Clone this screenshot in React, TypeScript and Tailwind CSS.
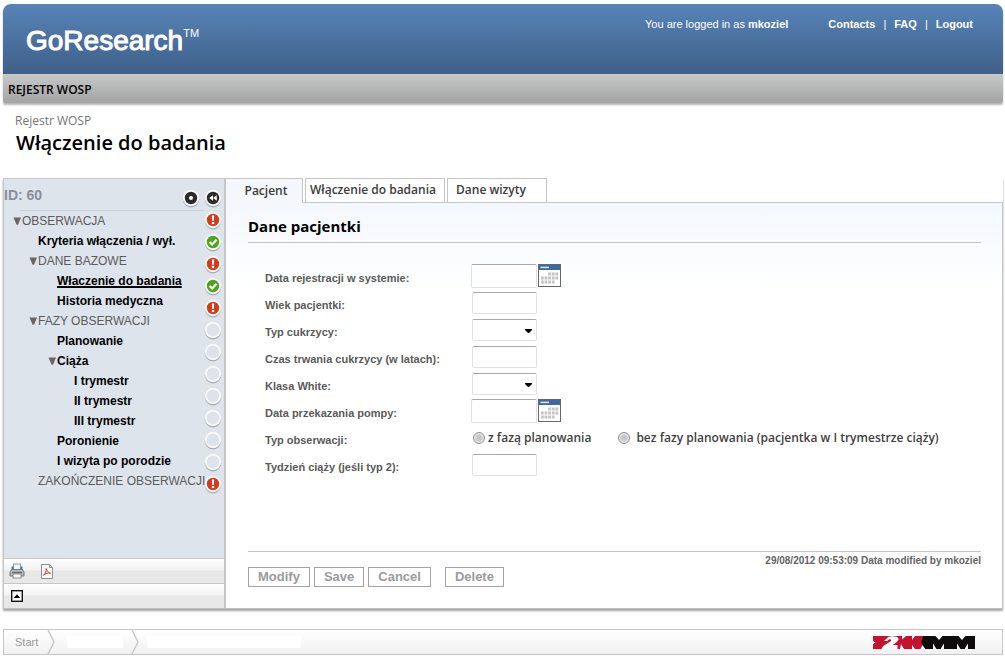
import React, { useId, useState } from "react";

type Status = "alert" | "ok" | "empty";

interface TreeItem {
  label: string;
  indent: string;
  kind: "group" | "leaf";
  arrow?: boolean;
  current?: boolean;
}

const TREE: TreeItem[] = [
  { label: "OBSERWACJA", indent: "pl-2", kind: "group", arrow: true },
  { label: "Kryteria włączenia / wył.", indent: "pl-[34px]", kind: "leaf" },
  { label: "DANE BAZOWE", indent: "pl-6", kind: "group", arrow: true },
  { label: "Właczenie do badania", indent: "pl-[53px]", kind: "leaf", current: true },
  { label: "Historia medyczna", indent: "pl-[53px]", kind: "leaf" },
  { label: "FAZY OBSERWACJI", indent: "pl-6", kind: "group", arrow: true },
  { label: "Planowanie", indent: "pl-[53px]", kind: "leaf" },
  { label: "Ciąża", indent: "pl-[43px]", kind: "leaf", arrow: true },
  { label: "I trymestr", indent: "pl-[70px]", kind: "leaf" },
  { label: "II trymestr", indent: "pl-[70px]", kind: "leaf" },
  { label: "III trymestr", indent: "pl-[70px]", kind: "leaf" },
  { label: "Poronienie", indent: "pl-[53px]", kind: "leaf" },
  { label: "I wizyta po porodzie", indent: "pl-[53px]", kind: "leaf" },
  { label: "ZAKOŃCZENIE OBSERWACJI", indent: "pl-[34px]", kind: "group" },
];

const STATUSES: Status[] = [
  "alert", "ok", "alert", "ok", "alert",
  "empty", "empty", "empty", "empty", "empty", "empty", "empty",
  "alert",
];

function Disc({ fill, children }: { fill: string; children?: React.ReactNode }) {
  return (
    <svg width="18" height="20" viewBox="0 0 18 20" className="block shrink-0" aria-hidden="true">
      <circle cx="9" cy="11.3" r="8.2" fill="#7d838a" opacity="0.6" />
      <circle cx="9" cy="10" r="8.2" fill="#f8f8f8" />
      <circle cx="9" cy="10" r="6.2" fill={fill} />
      {children}
    </svg>
  );
}

function StatusIcon({ status }: { status: Status }) {
  if (status === "alert") {
    return (
      <Disc fill="#d23c1d">
        <path d="M7.8 5.4h2.4l-.4 5.400H8.2z" fill="#fff" />
        <circle cx="9" cy="13" r="1.3" fill="#fff" />
      </Disc>
    );
  }
  if (status === "ok") {
    return (
      <Disc fill="#4ea51c">
        <path d="M5.6 10l2.500 2.500 4.500-4.700" fill="none" stroke="#fff" strokeWidth="2.2" />
      </Disc>
    );
  }
  return <Disc fill="#dde3ea" />;
}

function Triangle() {
  return (
    <svg width="10" height="10" viewBox="0 0 10 10" className="block shrink-0" aria-hidden="true">
      <path d="M1.500 1.500h7.500L6 8.700H4.600z" fill="#666" />
    </svg>
  );
}

function CalendarIcon() {
  const dots: React.ReactNode[] = [];
  for (let r = 0; r < 3; r++) {
    for (let c = 0; c < 5; c++) {
      if ((r === 0 && c < 2) || (r === 2 && c > 3)) continue;
      dots.push(<rect key={`${r}-${c}`} x={3 + c * 3.6} y={8.500 + r * 4} width="2.8" height="3" fill="#c4c4c4" />);
    }
  }
  return (
    <svg width="23" height="23" viewBox="0 0 23 23" className="block" aria-hidden="true">
      <rect x="0.5" y="0.5" width="22" height="22" fill="#fff" stroke="#666" />
      <rect x="1" y="1" width="21" height="5" fill="#3a6ba5" />
      <path d="M2.500 3.400h8.500" stroke="#dfe9f4" strokeWidth="1.5" />
      {dots}
    </svg>
  );
}

function PrinterIcon() {
  return (
    <svg width="16" height="16" viewBox="0 0 16 16" aria-hidden="true">
      <rect x="4.500" y="1" width="7" height="6" fill="#f4f4f4" stroke="#9b9b9b" />
      <rect x="2.500" y="3.500" width="2" height="3.500" fill="#3c78ad" />
      <rect x="11.500" y="3.500" width="2" height="3.500" fill="#3c78ad" />
      <path d="M2.500 6.500h11l1.500 2.500v4H1V9z" fill="#bdbdbd" stroke="#777" />
      <path d="M3 9.500h10" stroke="#6a6a6a" strokeWidth="1.500" />
      <rect x="4" y="11" width="8" height="4" fill="#fff" stroke="#8b8b8b" />
    </svg>
  );
}

function PdfIcon() {
  return (
    <svg width="12" height="15" viewBox="0 0 12 15" aria-hidden="true">
      <path d="M.5.5H8.500l3 3v11H.5z" fill="#fafafa" stroke="#8d8d8d" />
      <path d="M8.500.5v3h3" fill="none" stroke="#8d8d8d" />
      <path d="M5.200 4.500c.6 2 1.500 3.800 4.300 4.800C6.800 8.700 5 9.300 2.500 11.300 4.200 9.500 5.400 7 5.200 4.500z" fill="#fbdada" stroke="#e8383b" strokeLinejoin="round" />
    </svg>
  );
}

function CompanyLogo() {
  return (
    <svg width="102" height="13" viewBox="0 0 102 13" role="img" aria-label="2KMM">
      <path d="M0 0h51v13H0z" fill="#c4122f" />
      <path d="M0 5l2.500 1.500L0 8z" fill="#fff" />
      <path d="M11 5l4-3.700C18-.4 25 0 25.500 2.700c.3 2.200-3.500 4.600-6 6.300h5V13H8.500c1-2.800 3.500-4.200 6-5.700 2-1.200 4-2.500 3.500-3.500-.6-1-2.500-.3-3.700 1.200z" fill="#fff" />
      <path d="M29 0h4l-4 3.500zM28 8l3 5h-4z" fill="#fff" />
      <path d="M39 0h3l-3 4zM39 13h3l-3-4z" fill="#fff" />
      <path d="M50 0h12.500l3.500 4 3.500-4h6.500v13H71V7.500L67.500 13h-4L60 7.500V13H52l-4-6.500z" fill="#0d0b0c" />
      <path d="M76 0h9.500l3.500 4 3.500-4H102v13h-7V7.500L91.500 13h-4L84 7.500V13h-8z" fill="#0d0b0c" />
      <path d="M47.500 13l2-4 2.500 4z" fill="#fff" />
    </svg>
  );
}

const fieldBorder = "border border-[#dfe0ea] border-t-[#a7a8b0] rounded-xs bg-white";

function Row({ label, children }: { label: string; children: (id: string) => React.ReactNode }) {
  const id = useId();
  return (
    <div className="flex h-[27px] items-center">
      <label htmlFor={id} className="w-[207px] shrink-0 pt-[5px] text-[11px] font-bold text-[#5a5a5a]">
        {label}
      </label>
      {children(id)}
    </div>
  );
}

function DateField({ id }: { id: string }) {
  return (
    <div className="-ml-px flex items-center gap-px">
      <input id={id} type="text" className={`${fieldBorder} h-6 w-[66px] px-1 text-[11px]`} />
      <button type="button" aria-label="Kalendarz">
        <CalendarIcon />
      </button>
    </div>
  );
}

function TextField({ id }: { id: string }) {
  return <input id={id} type="text" className={`${fieldBorder} h-[22px] w-[65px] px-1 text-[11px]`} />;
}

function SelectField({ id }: { id: string }) {
  return (
    <div className="relative flex">
      <select id={id} className={`${fieldBorder} h-[22px] w-[65px] appearance-none px-1 text-[11px]`}>
        <option value=""></option>
      </select>
      <svg width="7" height="4" viewBox="0 0 7 4" className="pointer-events-none absolute top-[10px] right-[5px]" aria-hidden="true">
        <path d="M0 0h7v1L4 4H3L0 1z" fill="#000" />
      </svg>
    </div>
  );
}

function Radio({ label, gap, value, onChange, checked }: { label: string; gap: string; value: string; checked: boolean; onChange: (v: string) => void }) {
  return (
    <label className={`flex items-center ${gap} font-["Open_Sans","Noto_Sans",sans-serif] text-[12px] font-semibold whitespace-nowrap text-[#3f3f3f]`}>
      <input
        type="radio"
        name="typ-obserwacji"
        value={value}
        checked={checked}
        onChange={() => onChange(value)}
        className="size-3 appearance-none rounded-full border border-[#8e8f8f] bg-[radial-gradient(circle,#c3c6ca_30%,#eeeeee_75%)] checked:bg-[#3a6ba5]"
      />
      {label}
    </label>
  );
}

function ActionButton({ children }: { children: string }) {
  return (
    <button type="button" className="h-5 border border-[#a3a3a3] bg-white px-[9px] text-[13px] leading-[18px] font-bold text-[#9b9b9b]">
      {children}
    </button>
  );
}

function Sidebar() {
  return (
    <aside className="flex w-[223px] shrink-0 flex-col border-t border-r-2 border-l border-[#c6c6c6] bg-[#dde4ec]">
      <div className="flex flex-1">
        <nav className="min-w-0 flex-1" aria-label="Formularze">
          <div className="flex h-8 items-center justify-between text-[14px] font-bold text-[#8b8d9c]">
            <span>ID: 60</span>
            <button type="button" aria-label="Stop" className="mt-[6px] mr-1">
              <Disc fill="#2b2b2b">
                <circle cx="9" cy="10" r="2" fill="#fff" />
              </Disc>
            </button>
          </div>
          <ul className="-mt-px ml-4 border-t border-[#c9d2dc]" />
          <ul className="text-[12px]">
            {TREE.map((item) => (
              <li key={item.label} className={`flex h-5 items-center ${item.indent}`}>
                {item.arrow && <Triangle />}
                <a
                  href="#"
                  aria-current={item.current ? "page" : undefined}
                  className={`whitespace-nowrap ${item.kind === "group" ? "text-[#5b5b5b]" : "font-bold text-black"} ${item.current ? "underline decoration-2 underline-offset-1" : ""}`}
                >
                  {item.label}
                </a>
              </li>
            ))}
          </ul>
        </nav>
        <div className="mt-2 flex w-[20px] shrink-0 flex-col">
          <button type="button" aria-label="Zwiń" className="flex h-[22px] items-center">
            <Disc fill="#2b2b2b">
              <path d="M9 7.200v5.600L5.200 10zM12.800 7.200v5.600L9 10z" fill="#fff" />
            </Disc>
          </button>
          {STATUSES.map((s, i) => (
            <span key={i} className="flex h-[22px] items-center">
              <StatusIcon status={s} />
            </span>
          ))}
        </div>
      </div>
      <div className="flex h-[25px] items-center gap-4 border-t border-[#c6c6c6] bg-linear-to-b from-white via-[#f3f3f3] via-45% to-[#e8e8e8] to-50% px-[5px]">
        <button type="button" aria-label="Drukuj"><PrinterIcon /></button>
        <button type="button" aria-label="PDF"><PdfIcon /></button>
      </div>
      <div className="flex h-[25px] items-center border-t border-[#c6c6c6] bg-linear-to-b from-white via-[#f3f3f3] via-45% to-[#e8e8e8] to-50% px-[7px]">
        <button type="button" aria-label="Do góry">
          <svg width="12" height="12" viewBox="0 0 12 12" className="block" aria-hidden="true">
            <rect x="0.700" y="0.700" width="10.600" height="10.600" fill="#fff" stroke="#111" strokeWidth="1.400" />
            <path d="M6 4.200L9.200 8H2.800z" fill="#000" />
          </svg>
        </button>
      </div>
    </aside>
  );
}

const tabBase = 'h-6 border border-b-0 border-[#c6c6c6] font-["Open_Sans","Noto_Sans",sans-serif] text-[12px] font-semibold whitespace-nowrap text-[#3c3c3c]';

export default function App() {
  const [mode, setMode] = useState("");
  return (
    <div className='min-h-screen bg-white px-[3px] pt-1 pr-[2px] font-["Liberation_Sans",Arial,sans-serif] text-[12px]'>
      <header className="overflow-hidden rounded-t-lg rounded-b-xs shadow-[0_2px_2px_#b5b5b5]">
        <div className="flex h-[70px] justify-between bg-linear-to-b from-[#5784b8] to-[#3f6089] pr-[30px] pl-[23px] text-white">
          <div className="flex items-start pt-[21px]">
            <span className="text-[28px] leading-8 [-webkit-text-stroke:1px_white]">GoResearch</span>
            <span className="text-[11px] leading-4">TM</span>
          </div>
          <div className="flex h-10 items-center text-[11px]">
            <span className="mr-10">
              You are logged in as <b>mkoziel</b>
            </span>
            <nav className="flex gap-2" aria-label="Konto">
              <a href="#" className="font-bold">Contacts</a>
              <span>|</span>
              <a href="#" className="font-bold">FAQ</a>
              <span>|</span>
              <a href="#" className="font-bold">Logout</a>
            </nav>
          </div>
        </div>
        <div className='flex h-[29px] items-center bg-linear-to-b from-[#c8c9c9] to-[#a3a3a3] px-[5px] font-["Open_Sans","Noto_Sans",sans-serif] pt-[2px] text-[12px] font-semibold text-black'>
          REJESTR WOSP
        </div>
      </header>

      <div className='px-3 pt-[10px] pb-[21px] font-["Open_Sans","Noto_Sans",sans-serif]'>
        <p className="text-[12px] leading-4 text-[#747474]">Rejestr WOSP</p>
        <h1 className="pl-px text-[20px] leading-7 font-semibold text-black">Włączenie do badania</h1>
      </div>

      <div className="flex min-h-[431px] border-b border-[#c0c0c0] shadow-[0_2px_2px_#a5a5a5]">
        <Sidebar />
        <main className="flex min-w-0 flex-1 flex-col">
          <div className="flex bg-white" role="tablist">
            <button type="button" role="tab" aria-selected="true" className={`${tabBase} relative z-10 -mb-px mr-[2px] h-[25px] w-[77px] border-l-0 bg-[#f4f8fc] pl-1`}>Pacjent</button>
            <button type="button" role="tab" aria-selected="false" className={`${tabBase} mr-[2px] w-[140px] bg-white pr-1 pb-[2px]`}>Włączenie do badania</button>
            <button type="button" role="tab" aria-selected="false" className={`${tabBase} w-[100px] bg-white pr-3 pb-[2px]`}>Dane wizyty</button>
          </div>
          <div className="flex flex-1 flex-col border-t border-r border-[#c6c6c6] bg-linear-to-b from-[#f4f8fc] to-white to-[90px] pr-[21px] pl-[22px]">
            <h2 className='border-b border-[#c6c6c6] pt-[13px] pb-[5px] font-["Open_Sans","Noto_Sans",sans-serif] text-[15px] leading-[21px] font-bold text-black'>
              Dane pacjentki
            </h2>
            <form className="mt-[19px] pl-[17px]" onSubmit={(e) => e.preventDefault()}>
              <Row label="Data rejestracji w systemie:">{(id) => <DateField id={id} />}</Row>
              <Row label="Wiek pacjentki:">{(id) => <TextField id={id} />}</Row>
              <Row label="Typ cukrzycy:">{(id) => <SelectField id={id} />}</Row>
              <Row label="Czas trwania cukrzycy (w latach):">{(id) => <TextField id={id} />}</Row>
              <Row label="Klasa White:">{(id) => <SelectField id={id} />}</Row>
              <Row label="Data przekazania pompy:">{(id) => <DateField id={id} />}</Row>
              <Row label="Typ obserwacji:">
                {(id) => (
                  <div id={id} role="radiogroup" aria-label="Typ obserwacji" className="flex gap-[27px] pl-px">
                    <Radio label="z fazą planowania" gap="gap-[3px]" value="1" checked={mode === "1"} onChange={setMode} />
                    <Radio label="bez fazy planowania (pacjentka w I trymestrze ciąży)" gap="gap-[6px]" value="2" checked={mode === "2"} onChange={setMode} />
                  </div>
                )}
              </Row>
              <Row label="Tydzień ciąży (jeśli typ 2):">{(id) => <TextField id={id} />}</Row>
            </form>
            <div className="mt-auto flex h-[57px] flex-col border-t border-[#c6c6c6]">
              <p className="pt-[2px] text-right text-[10px] leading-[13px] font-bold text-[#636363]">29/08/2012 09:53:09 Data modified by mkoziel</p>
              <div className="flex gap-1">
                <ActionButton>Modify</ActionButton>
                <ActionButton>Save</ActionButton>
                <ActionButton>Cancel</ActionButton>
                <span className="w-1.5" />
                <ActionButton>Delete</ActionButton>
              </div>
            </div>
          </div>
        </main>
      </div>

      <footer className="mt-5 flex h-[26px] items-center justify-between border border-[#c6c6c6] bg-linear-to-b from-white to-[#f1f1f1] pr-[27px] pl-[11px]">
        <nav className="flex h-full items-center text-[11px] text-[#999]" aria-label="Ścieżka">
          <a href="#" className="w-8">Start</a>
          <svg width="8" height="24" viewBox="0 0 8 24" aria-hidden="true">
            <path d="M1 0l6 12-6 12" fill="none" stroke="#c9c9c9" strokeWidth="1.500" />
          </svg>
          <span className="ml-3 h-3 w-14 rounded-xs bg-white" />
          <svg width="8" height="24" viewBox="0 0 8 24" className="ml-2" aria-hidden="true">
            <path d="M1 0l6 12-6 12" fill="none" stroke="#c9c9c9" strokeWidth="1.500" />
          </svg>
          <span className="ml-2 h-3 w-[154px] rounded-xs bg-white" />
        </nav>
        <CompanyLogo />
      </footer>
    </div>
  );
}
